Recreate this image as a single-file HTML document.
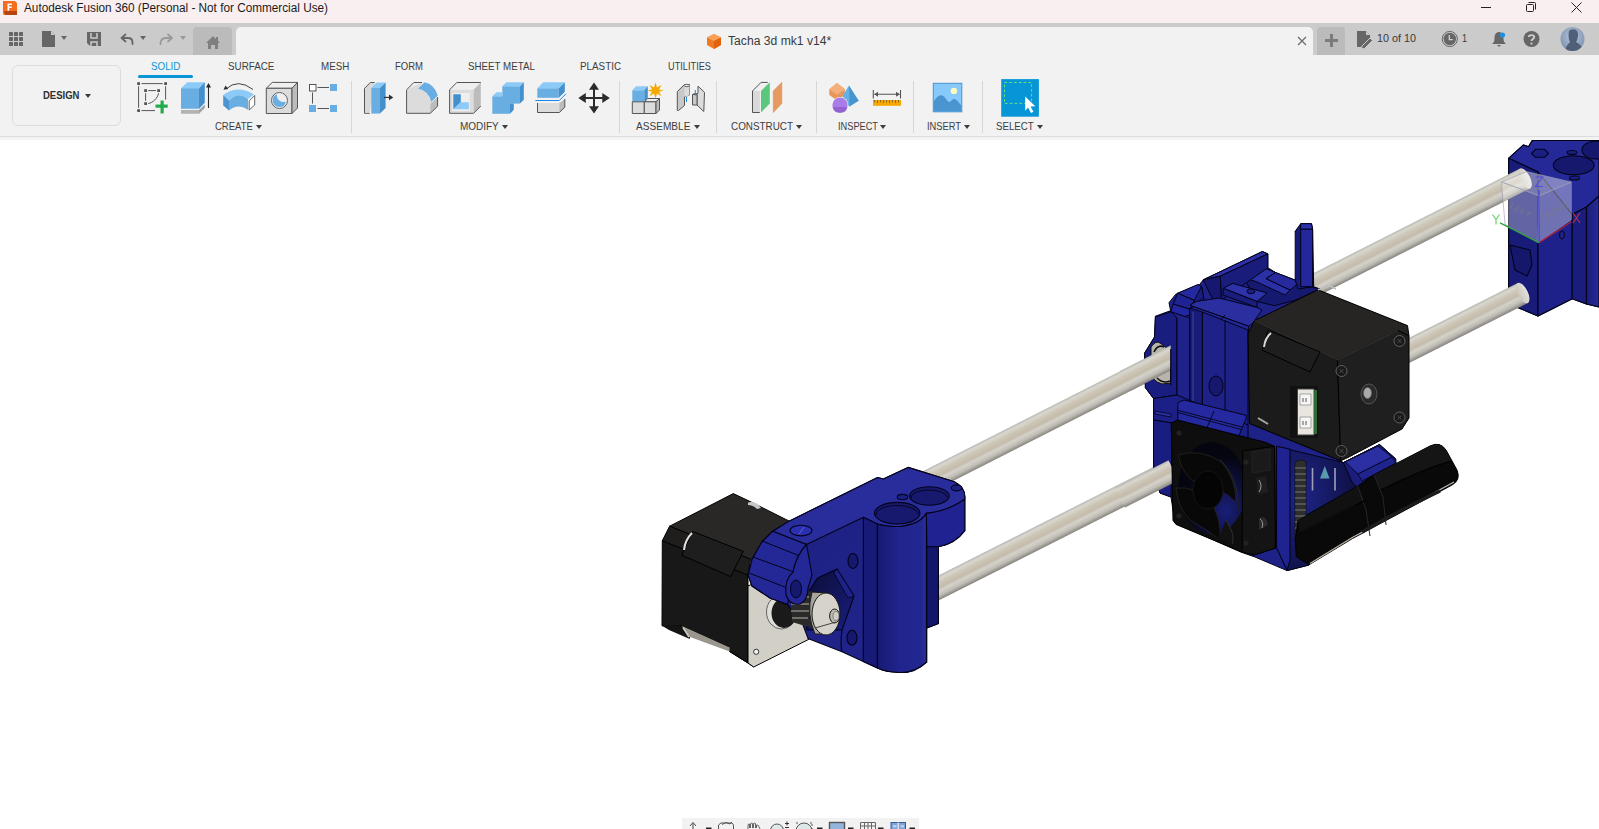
<!DOCTYPE html>
<html><head><meta charset="utf-8">
<style>
*{margin:0;padding:0;box-sizing:border-box}
html,body{width:1599px;height:829px;overflow:hidden;background:#ffffff;font-family:"Liberation Sans",sans-serif;color:#3d3d3d}
.a{position:absolute}
#title{left:0;top:0;width:1599px;height:23px;background:#f9eff0}
#tabbar{left:0;top:23px;width:1599px;height:32px;background:#cbcbcb}
#toolbar{left:0;top:55px;width:1599px;height:82px;background:#f2f2f2;border-bottom:1px solid #dddddd}
#strip{left:0;top:137px;width:1599px;height:3px;background:#f3f3f3}
.t{position:absolute;white-space:nowrap;line-height:1}
.tab{font-size:11px;top:60.8px;color:#3d3d3d;transform-origin:0 0}
.grp{font-size:11px;top:120.7px;color:#3d3d3d;transform-origin:0 0}
.sep{position:absolute;top:81px;width:1px;height:52px;background:#d6d6d6}
.arr{position:absolute;width:0;height:0;border-left:3px solid transparent;border-right:3px solid transparent;border-top:4px solid #3d3d3d}
svg{position:absolute;overflow:visible}
</style></head><body>
<div id="title" class="a"></div>
<div id="tabbar" class="a"></div>
<div id="toolbar" class="a"></div>
<div id="strip" class="a"></div>

<!-- title bar -->
<svg style="left:0;top:0" width="30" height="23">
  <path d="M3 1 L15 1 L17 3 L17 15 L4 15 L3 14 Z" fill="#f46d1e"/>
  <path d="M4 11 L17 11 L17 15 L5 15 Z" fill="#b5460f"/>
  <path d="M7.5 3.5 h4.5 v1.6 h-2.8 v1.5 h2.5 v1.5 h-2.5 v2.6 h-1.7 z" fill="#fff"/>
</svg>
<div class="t" style="left:24px;top:2.2px;font-size:12.5px;color:#1a1a1a;transform:scaleX(0.941);transform-origin:0 0">Autodesk Fusion 360 (Personal - Not for Commercial Use)</div>
<svg style="left:1480px;top:0" width="110" height="20">
  <line x1="1" y1="7.5" x2="11" y2="7.5" stroke="#222" stroke-width="1"/>
  <rect x="46.5" y="4.5" width="7" height="7" fill="none" stroke="#222" stroke-width="1" rx="1"/>
  <path d="M48.5 2.5 H54.5 a1 1 0 0 1 1 1 V9.5" fill="none" stroke="#222" stroke-width="1"/>
  <path d="M91.5 2.5 L101.5 12.5 M101.5 2.5 L91.5 12.5" stroke="#222" stroke-width="1"/>
</svg>

<!-- tab bar icons -->
<svg style="left:0;top:23px" width="240" height="32">
  <g fill="#666">
    <rect x="9" y="9" width="4" height="4" rx=".6"/><rect x="14" y="9" width="4" height="4" rx=".6"/><rect x="19" y="9" width="4" height="4" rx=".6"/>
    <rect x="9" y="14" width="4" height="4" rx=".6"/><rect x="14" y="14" width="4" height="4" rx=".6"/><rect x="19" y="14" width="4" height="4" rx=".6"/>
    <rect x="9" y="19" width="4" height="4" rx=".6"/><rect x="14" y="19" width="4" height="4" rx=".6"/><rect x="19" y="19" width="4" height="4" rx=".6"/>
    <path d="M42 8 H51 L55 12 V24 H42 Z"/>
    <path d="M61 13 H67 L64 17 Z"/>
    <path d="M87 9 H101 V23 H90 L87 20 Z"/>
  </g>
  <path d="M91 10 V15 H97 V10" fill="none" stroke="#cbcbcb" stroke-width="1.5"/>
  <path d="M91 23 V19 H97 V23" fill="none" stroke="#cbcbcb" stroke-width="1.5"/>
  <path d="M51 8 L55 12 H51 Z" fill="#cbcbcb"/>
  <path d="M121.5 15 L125.5 11.5 M121.5 15 L125.5 18.5 M121.5 15 H128 Q132.5 15 132.5 19.5 V21" fill="none" stroke="#666" stroke-width="1.8" stroke-linecap="round"/>
  <path d="M140 13 H146 L143 17 Z" fill="#666"/>
  <path d="M172 15 L168 11.5 M172 15 L168 18.5 M172 15 H166 Q161 15 160.5 20 V21" fill="none" stroke="#9a9a9a" stroke-width="1.8" stroke-linecap="round"/>
  <path d="M180 13 H186 L183 17 Z" fill="#9a9a9a"/>
</svg>
<div class="a" style="left:193px;top:27px;width:39px;height:28px;background:#bbbbbb;border-radius:4px 4px 0 0"></div>
<svg style="left:193px;top:27px" width="39" height="28">
  <path d="M13 16 L20 9 L23 12 V10 H25 V14 L27 16 H25 V22 H22 V18 H18 V22 H15 V16 Z" fill="#7f7f7f"/>
</svg>
<div class="a" style="left:236px;top:27px;width:1077px;height:28px;background:#f2f2f2;border-radius:5px 5px 0 0"></div>
<svg style="left:706px;top:33px" width="16" height="17">
  <path d="M8 1 L15 4.5 L15 12 L8 16 L1 12 L1 4.5 Z" fill="#f07a22"/>
  <path d="M8 1 L15 4.5 L8 8 L1 4.5 Z" fill="#f9a25a"/>
  <path d="M8 8 L15 4.5 L15 12 L8 16 Z" fill="#e0620e"/>
</svg>
<div class="t" style="left:727.5px;top:35.4px;font-size:12.5px;color:#3a3a3a;transform:scaleX(0.971);transform-origin:0 0">Tacha 3d mk1 v14*</div>
<svg style="left:1296px;top:35px" width="12" height="12">
  <path d="M2 2 L10 10 M10 2 L2 10" stroke="#6e6e6e" stroke-width="1.3"/>
</svg>
<div class="a" style="left:1317px;top:27px;width:28px;height:28px;background:#bbbbbb;border-radius:4px 4px 0 0"></div>
<svg style="left:1317px;top:27px" width="28" height="28">
  <path d="M14.5 7 V20 M8 13.5 H21" stroke="#7c7c7c" stroke-width="3"/>
</svg>
<svg style="left:1356px;top:30px" width="20" height="18">
  <path d="M1 1 H10 L14 5 V8 L6 16 V17 H1 Z" fill="#666"/>
  <path d="M10 1 L14 5 H10 Z" fill="#cbcbcb"/>
  <path d="M6 16 L14 8 L16.5 10.5 L8.5 18.5 L5.5 18.8 Z" fill="#666" stroke="#cbcbcb" stroke-width="1"/>
</svg>
<div class="t" style="left:1377px;top:33.3px;font-size:11.5px;color:#3a3a3a;transform:scaleX(0.937);transform-origin:0 0">10 of 10</div>
<svg style="left:1440px;top:30px" width="20" height="18">
  <circle cx="9.8" cy="9" r="7.6" fill="none" stroke="#666" stroke-width="1"/>
  <circle cx="9.8" cy="9" r="6.2" fill="#666"/>
  <path d="M9.3 5 V9.6 H12.8" fill="none" stroke="#d0d0d0" stroke-width="1.3"/>
</svg>
<div class="t" style="left:1461.5px;top:33.3px;font-size:11.5px;color:#3a3a3a;transform:scaleX(0.8);transform-origin:0 0">1</div>
<svg style="left:1490px;top:30px" width="20" height="18">
  <path d="M9 2 C5 2 4.5 6 4.5 9 C4.5 12 3 13 2 14 H16 C15 13 13.5 12 13.5 9 C13.5 6 13 2 9 2 Z" fill="#666"/>
  <path d="M7 15 H11 L9 17 Z" fill="#666"/>
  <circle cx="12.5" cy="5" r="2.6" fill="#1e90e6"/>
</svg>
<svg style="left:1522px;top:30px" width="20" height="18">
  <circle cx="9.5" cy="9" r="8" fill="#666"/>
  <path d="M6.8 7 C6.8 4.5 12.2 4.5 12.2 7 C12.2 9 9.5 9 9.5 11" fill="none" stroke="#cbcbcb" stroke-width="1.9"/>
  <circle cx="9.5" cy="13.6" r="1.1" fill="#cbcbcb"/>
</svg>
<svg style="left:1560px;top:27px" width="26" height="25">
  <defs><radialGradient id="av" cx="50%" cy="40%" r="60%"><stop offset="0" stop-color="#b5c4da"/><stop offset="1" stop-color="#7f93b0"/></radialGradient>
  <clipPath id="avc"><circle cx="12.5" cy="12" r="12"/></clipPath></defs>
  <circle cx="12.5" cy="12" r="12" fill="url(#av)"/>
  <g clip-path="url(#avc)" fill="#4f5f78">
    <path d="M9 4 Q11 1.5 15 2.5 Q18.5 4 18 9 Q17.5 13 16 15 Q20 17 22 20 L23 26 H4 Q6 18 10 15.5 Q8.5 12 8.5 8 Z"/>
  </g>
</svg>

<!-- toolbar -->
<div class="a" style="left:12px;top:65px;width:109px;height:61px;border:1.5px solid #dcdcdc;border-radius:6px"></div>
<div class="t" style="left:42.5px;top:89.7px;font-size:11px;font-weight:bold;color:#2f2f2f;transform:scaleX(0.865);transform-origin:0 0">DESIGN</div>
<div class="arr" style="left:85px;top:94px"></div>

<div class="t tab" style="left:150.6px;transform:scaleX(0.89);color:#0696d7">SOLID</div>
<div class="a" style="left:138px;top:75px;width:55px;height:3px;background:#0696d7;border-radius:2px"></div>
<div class="t tab" style="left:228px;transform:scaleX(0.893)">SURFACE</div>
<div class="t tab" style="left:321.2px;transform:scaleX(0.89)">MESH</div>
<div class="t tab" style="left:394.5px;transform:scaleX(0.865)">FORM</div>
<div class="t tab" style="left:467.5px;transform:scaleX(0.888)">SHEET METAL</div>
<div class="t tab" style="left:580px;transform:scaleX(0.894)">PLASTIC</div>
<div class="t tab" style="left:668px;transform:scaleX(0.837)">UTILITIES</div>

<div class="t grp" style="left:214.6px;transform:scaleX(0.863)">CREATE</div><div class="arr" style="left:256px;top:125px"></div>
<div class="t grp" style="left:460px;transform:scaleX(0.906)">MODIFY</div><div class="arr" style="left:502px;top:125px"></div>
<div class="t grp" style="left:636px;transform:scaleX(0.918)">ASSEMBLE</div><div class="arr" style="left:694px;top:125px"></div>
<div class="t grp" style="left:731px;transform:scaleX(0.898)">CONSTRUCT</div><div class="arr" style="left:796px;top:125px"></div>
<div class="t grp" style="left:837.5px;transform:scaleX(0.839)">INSPECT</div><div class="arr" style="left:880px;top:125px"></div>
<div class="t grp" style="left:927px;transform:scaleX(0.847)">INSERT</div><div class="arr" style="left:964px;top:125px"></div>
<div class="t grp" style="left:996px;transform:scaleX(0.882)">SELECT</div><div class="arr" style="left:1037px;top:125px"></div>

<div class="sep" style="left:351px"></div>
<div class="sep" style="left:619px"></div>
<div class="sep" style="left:716px"></div>
<div class="sep" style="left:816px"></div>
<div class="sep" style="left:913px"></div>
<div class="sep" style="left:982px"></div>

<svg style="left:0;top:0" width="1100" height="140">
<g id="sketch">
  <g fill="#555">
    <rect x="137.2" y="82.2" width="2.8" height="2.8"/><rect x="164.2" y="82.2" width="2.8" height="2.8"/><rect x="137.2" y="109.2" width="2.8" height="2.8"/>
    <rect x="144.2" y="89.2" width="2.8" height="2.8"/><rect x="157.2" y="89.2" width="2.8" height="2.8"/><rect x="144.2" y="102.2" width="2.8" height="2.8"/>
  </g>
  <path d="M141.5 83.6 H162.7 M138.6 86.2 V107.8 M165.6 86.2 V99.6 M141.5 110.6 H155 M148.2 90.6 H156 M145.6 93.2 V100.8 M158.6 93.2 C157.5 98.5 153 102.5 148.2 103.6" fill="none" stroke="#555" stroke-width="1"/>
  <path d="M160.2 100.2 H164 V104.2 H168 V108 H164 V113.8 H160.2 V108 H155.2 V104.2 H160.2 Z" fill="#23aa4a" stroke="#f2f2f2" stroke-width=".6"/>
</g>
<g id="extrude">
  <path d="M181 88.2 L187.2 82.2 H204.8 L199 88.2 Z" fill="#8ccaf8"/>
  <path d="M181 88.2 H199 V108.8 H181 Z" fill="#68aee3"/>
  <path d="M199 88.2 L204.8 82.2 V102.8 L199 108.8 Z" fill="#4490cc"/>
  <path d="M181 110 H199 V113.8 H181 Z" fill="#b3b3b3"/>
  <path d="M199 110 L204.8 104.5 V108 L199 113.8 Z" fill="#a3a3a3"/>
  <path d="M208.5 108 V85" stroke="#2b2b2b" stroke-width="1.1"/>
  <path d="M206 87.5 L208.5 83 L211 87.5 Z" fill="#2b2b2b"/>
</g>
<g id="revolve">
  <path d="M223.2 95 Q238 84.5 254 94.5 L248 99 Q238.5 91 229 100.5 Z" fill="#8ccaf8"/>
  <path d="M229 100.5 Q238.5 91 248 99 V109.8 Q238 103 229 110.5 Z" fill="#68aee3"/>
  <path d="M223.2 95 L229 100.5 V110.5 L223.2 105.5 Z" fill="#4a95d0"/>
  <path d="M249.2 101 L254.7 95.5 V105 L249.2 110 Z" fill="#fff" stroke="#555" stroke-width=".9"/>
  <path d="M253 89.5 Q238 78 226 89" fill="none" stroke="#2b2b2b" stroke-width=".9"/>
  <path d="M223.5 89.8 L225.5 85.5 L228.2 89 Z" fill="#2b2b2b"/>
</g>
<g id="hole">
  <path d="M266.3 88.3 L272.3 82.4 H297.5 L292 88.3 Z" fill="#efefef" stroke="#555" stroke-width="1"/>
  <path d="M266.3 88.3 H292 V113.5 H266.3 Z" fill="#dcdcdc" stroke="#555" stroke-width="1"/>
  <path d="M292 88.3 L297.5 82.4 V108 L292 113.5 Z" fill="#bcbcbc" stroke="#555" stroke-width="1"/>
  <circle cx="279.5" cy="100.5" r="8" fill="#efefef" stroke="#555" stroke-width=".9"/>
  <path d="M277 94.2 A6.6 6.6 0 1 0 285.8 101.4 A6.5 6.5 0 0 1 277 94.2 Z" fill="#68aee3"/>
</g>
<g id="pattern">
  <rect x="309.5" y="84.5" width="6.5" height="6.5" fill="#fff" stroke="#555" stroke-width="1"/>
  <rect x="330" y="84" width="7" height="7" fill="#68aee3"/>
  <rect x="309" y="105" width="7" height="7" fill="#68aee3"/>
  <rect x="330" y="105" width="7" height="7" fill="#68aee3"/>
  <path d="M317.5 87.5 H329 M312.5 92.5 V103.6 M317.5 108.5 H329" stroke="#555" stroke-width="1"/>
</g>
<g id="presspull">
  <path d="M374.6 82.5 H370.3 L364.5 88.4 V113.3 H369.7" fill="#d9d9d9" stroke="#555" stroke-width="1"/>
  <path d="M365 88.4 H370 V112.8 H365 Z" fill="#d9d9d9"/>
  <path d="M371.3 88 L376.5 82.4 H385.6 L380 88 Z" fill="#8ccaf8"/>
  <path d="M371.3 88 H380 V113.6 H371.3 Z" fill="#68aee3"/>
  <path d="M380 88 L385.6 82.4 V108 L380 113.6 Z" fill="#4490cc"/>
  <path d="M384 97.4 H390" stroke="#2b2b2b" stroke-width="1.1"/>
  <path d="M389 94.6 L393.3 97.4 L389 100.2 Z" fill="#2b2b2b"/>
</g>
<g id="fillet">
  <path d="M406.6 89.8 L413.8 82.5 H422.5 L418 88.5 Q426 89 431.3 102 V113.3 H406.6 Z" fill="#dcdcdc"/>
  <path d="M406.8 89.6 L413.8 82.5 H422" fill="#eeeeee" stroke="#555" stroke-width="1"/>
  <path d="M406.6 89.8 H418 Q428 91 431 102" fill="none" stroke="#f5f5f5" stroke-width="0"/>
  <path d="M418 88.5 L424.5 82.2 Q434.5 84 437.8 95.5 L431.3 102 Q428.5 90.8 418 88.5 Z" fill="#68aee3"/>
  <path d="M430.3 104 L437.5 97 V106.5 L430.3 113.3 Z" fill="#bcbcbc"/>
  <path d="M406.6 89.8 V113.3 H430.3 L437.6 106.2 V97" fill="none" stroke="#555" stroke-width="1"/>
</g>
<g id="shell">
  <path d="M449.6 89.8 L456.8 82.5 H480.8 L473.6 89.8 Z" fill="#efefef"/>
  <path d="M449.6 89.8 H473.6 V113.3 H449.6 Z" fill="#dcdcdc"/>
  <path d="M473.6 89.8 L480.8 82.5 V106 L473.6 113.3 Z" fill="#bcbcbc"/>
  <path d="M449.6 113.3 V89.8 L456.8 82.5 H480.8" fill="none" stroke="#555" stroke-width="1"/>
  <path d="M449.6 113.3 H473.6 L480.8 106" fill="none" stroke="#555" stroke-width="1"/>
  <rect x="452.3" y="93" width="17.5" height="17.8" fill="#efefef"/>
  <path d="M453.3 94.2 H460.8 V102.3 L453.3 109.3 Z" fill="#4490cc"/>
  <path d="M460.8 102.3 H468.8 V109.3 H453.3 Z" fill="#8ccaf8"/>
</g>
<g id="combine">
  <path d="M502.3 86.3 L506.3 82.3 H523.8 L520 86.3 Z" fill="#8ccaf8"/>
  <path d="M502.3 86.3 H520 V103.6 H502.3 Z" fill="#68aee3"/>
  <path d="M520 86.3 L523.8 82.3 V99.8 L520 103.6 Z" fill="#4490cc"/>
  <path d="M492.3 96.3 L496.5 92.3 H502.3 V96.3 Z" fill="#8ccaf8"/>
  <path d="M492.3 96.3 H510 V113.8 H492.3 Z" fill="#68aee3"/>
  <path d="M502.3 96.3 H510 V103.6 H502.3 Z" fill="#68aee3"/>
  <path d="M510 103.6 H513.8 V109.8 L510 113.8 Z" fill="#4490cc"/>
</g>
<g id="split">
  <path d="M537.3 88.3 L543.3 82.3 H564.8 L558.8 88.3 Z" fill="#8ccaf8"/>
  <path d="M537.3 88.3 H558.8 V97.8 H537.3 Z" fill="#68aee3"/>
  <path d="M558.8 88.3 L564.8 82.3 V91.8 L558.8 97.8 Z" fill="#4490cc"/>
  <path d="M535.3 100.5 H559.3 L566 93.8" fill="none" stroke="#1e88e5" stroke-width="1"/>
  <path d="M537.5 103 H559.3 V112.5 H537.5 Z" fill="#dcdcdc"/>
  <path d="M559.3 103 L564.8 99 V107.3 L559.3 112.5 Z" fill="#bcbcbc"/>
  <path d="M537.5 103 V112.5 H559.3 L564.8 107.3 V99" fill="none" stroke="#555" stroke-width="1"/>
</g>
<g id="move" fill="#2b2b2b">
  <path d="M593 86 H595 V110 H593 Z M582 97 H606 V99 H582 Z"/>
  <path d="M594 82.5 L599 89.8 H589 Z M594 113.5 L599 106.2 H589 Z M578.3 98 L585.8 93 V103 Z M609.8 98 L602.3 93 V103 Z"/>
</g>
<g id="newcomp">
  <path d="M632.3 90.3 L636 86.3 H647.8 L644.3 90.3 Z" fill="#8ccaf8"/>
  <path d="M632.3 90.3 H644.3 V101.8 H632.3 Z" fill="#68aee3"/>
  <path d="M644.3 90.3 L647.8 86.3 V98 L644.3 101.8 Z" fill="#4490cc"/>
  <path d="M632.3 101.8 H644.3 V113.5 H632.3 Z" fill="#dcdcdc" stroke="#555" stroke-width="1"/>
  <path d="M644.3 101.8 L647.8 98.5 H659.5 L656 101.8 Z" fill="#efefef" stroke="#555" stroke-width="1"/>
  <path d="M644.3 101.8 H656 V113.5 H644.3 Z" fill="#dcdcdc" stroke="#555" stroke-width="1"/>
  <path d="M656 101.8 L659.5 98.5 V110 L656 113.5 Z" fill="#bcbcbc" stroke="#555" stroke-width="1"/>
  <path d="M655.5 82.3 L657 87.5 L661.5 85 L659 89.5 L663.8 90.5 L659 91.8 L661.5 96.2 L657 93.5 L655.5 98.5 L654 93.5 L649.5 96.2 L652 91.8 L647.3 90.5 L652 89.5 L649.5 85 L654 87.5 Z" fill="#f5a800"/>
</g>
<g id="joint">
  <path d="M677.3 91.5 L684.5 84.6 H689.5 V95 L684.5 96.8 V105.5 L678.5 110.5 H677.3 Z" fill="#c8c8c8" stroke="#555" stroke-width="1"/>
  <path d="M684.5 85 H689.5 V95 Q687 96.8 684.5 96.8 Z" fill="#dcdcdc"/>
  <ellipse cx="686.8" cy="85.5" rx="2.5" ry="1.2" fill="#f2f2f2" stroke="#555" stroke-width=".9"/>
  <path d="M686.5 97 V102" stroke="#1e88e5" stroke-width="1"/>
  <path d="M692.5 94.5 Q695 93 697 94.5 V105 L703.8 111.5 L704.5 92.3 L698 86.2 V93.5 Z" fill="#dcdcdc" stroke="#555" stroke-width="1"/>
  <path d="M692.5 94.5 V105 H697 V94.5 Z" fill="#c8c8c8" stroke="#555" stroke-width="1"/>
  <path d="M695.3 90 V95.5" stroke="#1e88e5" stroke-width="1"/>
</g>
<g id="construct">
  <path d="M767.8 82.4 H761 L752.5 91 V112.5 H759.8" fill="#f0f0f0" stroke="#555" stroke-width="1"/>
  <path d="M753 91 H759.8 V112 H753 Z" fill="#d9d9d9"/>
  <path d="M761 91 L769.8 82.3 V103.5 L761 112.5 Z" fill="#5ac87c"/>
  <path d="M773.3 91 L781.8 82.3 V103.5 L773.3 112.5 Z" fill="#e69a62" stroke="#d88748" stroke-width=".5"/>
</g>
<g id="inspect">
  <path d="M829.3 89.3 L837 83 L844.8 89.3 L844.8 95 L837 100.5 L829.3 95 Z" fill="#e8955a"/>
  <path d="M829.3 89.3 L837 83 L844.8 89.3 L837 95 Z" fill="#f3b07a"/>
  <path d="M849 85.5 L842.5 96 L849.2 106.8 Z" fill="#65b0e4"/>
  <path d="M849 85.5 L858.8 100.8 L849.2 106.8 Z" fill="#4596d0"/>
  <circle cx="840" cy="105" r="8" fill="#f2f2f2"/>
  <circle cx="840" cy="105" r="7.6" fill="#a87de8"/>
  <path d="M832.6 107 H847.4 A7.6 7.6 0 0 1 832.6 107 Z" fill="#9162d0"/>
</g>
<g id="measure">
  <path d="M873.3 90 V98.5 M900.5 90 V98.5 M874.5 94.3 H899.3" stroke="#555" stroke-width="1.1"/>
  <path d="M874.2 94.3 L878 91.8 V96.8 Z M899.8 94.3 L896 91.8 V96.8 Z" fill="#555"/>
  <rect x="873" y="100" width="28" height="5.8" fill="#f5a800"/>
  <path d="M874.5 100 V102.3 M877.5 100 V103 M880.5 100 V102.3 M883.5 100 V103 M886.5 100 V102.3 M889.5 100 V103 M892.5 100 V102.3 M895.5 100 V103 M898.5 100 V102.3" stroke="#6a5a3a" stroke-width=".8"/>
</g>
<g id="insert">
  <rect x="933.3" y="83.3" width="28.5" height="28.5" fill="#87c9fb" stroke="#4a92cf" stroke-width="1"/>
  <path d="M933.8 101.5 Q938 94.5 941.5 95.2 Q944 95.5 947.5 101 Q949 103 951 101 Q954 97 957.5 101 L961.3 105.5 V111.3 H933.8 Z" fill="#4a94cf"/>
  <circle cx="953.9" cy="90.9" r="3.2" fill="#fffac0"/>
</g>
<g id="select">
  <rect x="1001.2" y="79.1" width="37.7" height="37.6" fill="#0696d7"/>
  <rect x="1004.5" y="82.5" width="27.1" height="20.9" fill="none" stroke="#6ee07a" stroke-width="1" stroke-dasharray="2.6 2.2"/>
  <path d="M1025.2 96.6 L1035.3 106.2 L1030.5 106.4 L1033.5 111.8 L1031 113.1 L1028.1 107.6 L1025.2 110.8 Z" fill="#fff"/>
</g>
</svg>


<svg style="left:0;top:0" width="1599" height="829">
<defs>
  <clipPath id="canvasclip"><rect x="0" y="140" width="1599" height="689"/></clipPath>
  <linearGradient id="rod" x1="0" y1="0" x2="0" y2="1">
    <stop offset="0" stop-color="#b9b8b0"/>
    <stop offset="0.12" stop-color="#d8d7d0"/>
    <stop offset="0.3" stop-color="#cdc6b6"/>
    <stop offset="0.5" stop-color="#c4bcab"/>
    <stop offset="0.63" stop-color="#d4d2ca"/>
    <stop offset="0.82" stop-color="#bdbbb3"/>
    <stop offset="1" stop-color="#86837c"/>
  </linearGradient>
  <linearGradient id="cyl" x1="0" y1="0" x2="1" y2="0">
    <stop offset="0" stop-color="#171a72"/>
    <stop offset="0.45" stop-color="#20248c"/>
    <stop offset="0.9" stop-color="#232792"/>
    <stop offset="1" stop-color="#2d3198"/>
  </linearGradient>
  <linearGradient id="armfront" x1="0" y1="0" x2="1" y2="1">
    <stop offset="0" stop-color="#1c1f80"/>
    <stop offset="1" stop-color="#22268e"/>
  </linearGradient>
  <radialGradient id="fanin" cx="60%" cy="40%" r="55%">
    <stop offset="0" stop-color="#05051a"/>
    <stop offset="0.6" stop-color="#10134a"/>
    <stop offset="1" stop-color="#1a1e70"/>
  </radialGradient>
  <radialGradient id="navy" cx="30%" cy="40%" r="70%">
    <stop offset="0" stop-color="#1e2488"/>
    <stop offset="1" stop-color="#0e1040"/>
  </radialGradient>
  <linearGradient id="cube" x1="0" y1="0" x2="0" y2="1">
    <stop offset="0" stop-color="#ffffff" stop-opacity="0.6"/>
    <stop offset="1" stop-color="#ffffff" stop-opacity="0.4"/>
  </linearGradient>
</defs>

<g clip-path="url(#canvasclip)">
<!-- ============ right block ============ -->
<defs>
  <linearGradient id="rcyl" x1="0" y1="0" x2="1" y2="0">
    <stop offset="0" stop-color="#1a1d7c"/>
    <stop offset="1" stop-color="#262a96"/>
  </linearGradient>
  <linearGradient id="rodcap" x1="0" y1="0" x2="1" y2="0">
    <stop offset="0" stop-color="#c9c6bc"/>
    <stop offset="1" stop-color="#e4e2dc"/>
  </linearGradient>
</defs>
<g id="rblock" stroke="#03031a" stroke-width="1.1" stroke-linejoin="round">
  <path d="M1508.6 158.3 L1523.5 144.9 L1528.5 146.8 L1532.4 140.4 H1599 V307 L1586.5 304 L1572.2 298.8 L1538 316 L1516.4 307 L1508.6 300 Z" fill="#1d2086"/>
  <path d="M1508.6 158.3 L1523.5 144.9 L1528.5 146.8 L1532.4 140.4 H1599 V196 L1586.5 207 L1572.2 214.4 L1538 172 Z" fill="#252997"/>
  <path d="M1508.6 158.3 L1538 172 V316 L1516.4 307 L1508.6 300 Z" fill="#181b78"/>
  <path d="M1538 172 L1572.2 214.4 V298.8 L1538 316 Z" fill="#1e2189"/>
  <path d="M1572.2 214.4 L1586.5 207 V304 L1572.2 298.8 Z" fill="#1a1d7e"/>
  <path d="M1586.5 207 L1599 196 V307 L1586.5 304 Z" fill="url(#rcyl)"/>
  <ellipse cx="1573.7" cy="165.3" rx="20.4" ry="9.5" fill="#15186c"/><ellipse cx="1596" cy="150" rx="14" ry="9" fill="#15186c"/>
  <ellipse cx="1572" cy="152.5" rx="5" ry="2" fill="#1c1f82"/>
  <ellipse cx="1574.5" cy="178" rx="5" ry="2" fill="#1c1f82"/>
  <path d="M1531.5 153.3 l4 -4 h9 l4 4 l-4 4 h-9 z" fill="#1c1f82"/>
  <path d="M1510 245 L1530 250 L1532 265 L1527 276 L1515 270 Z" fill="#14176a"/>
  <ellipse cx="1562" cy="235" rx="2.5" ry="4" fill="none" stroke-width=".9"/>
</g>

<!-- ============ rods ============ -->
<g transform="translate(915 487.7) rotate(-26.88)">
  <rect x="0" y="-11.2" width="684" height="22.4" fill="url(#rod)"/>
  <ellipse cx="684" cy="0" rx="5" ry="11.2" fill="url(#rodcap)"/>
</g>
<g transform="translate(930 592.3) rotate(-26.79)">
  <rect x="0" y="-11.2" width="664" height="22.4" fill="url(#rod)"/>
  <ellipse cx="664" cy="0" rx="5" ry="11.2" fill="url(#rodcap)"/>
</g>

<!-- ============ carriage body ============ -->
<g id="carriage" stroke="#03031a" stroke-width="1" stroke-linejoin="round">
  <!-- overall silhouette -->
  <path d="M1144.5 353.3 L1154.5 337 L1155.4 317.1 L1170.8 311.7 L1169 302.7 L1175.8 294.2 L1199.7 284.5 L1203.3 279.8 L1262.4 251.5 L1267.8 253.9 L1267.8 267.7 L1275.6 272.6 L1295.2 280.1 L1320 289 L1250 330 L1249.5 423.4 L1340.7 460.8 L1343.3 462.6 L1379.5 444.5 L1395.8 459 L1357.8 486 L1298 520 L1295 540 L1309 565 L1287 570.6 L1255 557 L1240.7 552 L1175 523 L1171 497 L1160 493 L1153.6 470 L1153.6 398.6 L1145.4 387.7 Z" fill="#1e2188"/>
  <!-- back U block -->
  <path d="M1243.7 277.4 L1262.4 267.1 L1275.6 272.6 L1296.2 283 L1320 289 L1296.2 300 L1274.4 305.7 L1257 301.5 Z" fill="#161970"/>
  <path d="M1243.7 277.4 L1262.4 267.1 L1275.6 272.6 L1266 278.6 L1290 290 L1285 295 L1257 282 Z" fill="#2b30a6"/>
  <path d="M1266 278.6 L1275.6 272.6 L1300 282 L1290 290 Z" fill="#262a9c"/>
  <!-- wall -->
  <path d="M1203.3 279.8 L1262.4 251.5 L1267.8 253.9 L1220.2 276.2 Z" fill="#2c30a4"/>
  <path d="M1220.2 276.2 L1267.8 253.9 L1267.8 267.7 L1221.4 300.3 Z" fill="#191c7a"/>
  <path d="M1203.3 279.8 L1220.2 276.2 L1221.4 300.3 L1213 300 Z" fill="#15186e"/>
  <!-- plate with hole -->
  <path d="M1223.2 288.3 L1232.8 283.4 L1267.2 293 L1257 301.5 Z" fill="#2d32a8"/>
  <ellipse cx="1251" cy="291.3" rx="4" ry="2.4" fill="#1c1f82"/>
  <path d="M1223.2 288.3 L1257 301.5 L1257 307.5 L1223 295 Z" fill="#1a1d7c"/>
  <!-- left ridge blocks -->
  <path d="M1177.6 293.2 L1197.9 284.5 L1201.5 286.3 L1204 300 L1195 304 L1194.3 300.4 Z" fill="#2529a0"/>
  <path d="M1173.3 304 L1177.6 293.2 L1194.3 300.4 L1190 309.4 Z" fill="#1f2292"/>
  <path d="M1201.5 286.3 L1203.7 297.5 L1195 304 L1194.3 300.4 Z" fill="#1a1d80"/>
  <path d="M1155.2 316.3 L1171.1 310.5 L1173.3 304 L1190 309.4 L1190 315 L1172 320 L1160 322 Z" fill="#2226a0"/>
  <!-- front ledge -->
  <path d="M1190 305 L1196 301.5 L1219 298 L1257 307.5 L1262 310 L1252.7 323.2 L1248.6 326.2 L1192.5 306.3 Z" fill="#2a2e9f"/>
  <path d="M1192.5 306.3 L1248.6 326.2 L1248 335 L1190 314 Z" fill="#23279a"/>
  <path d="M1225 315 L1218 323" fill="none"/>
  <!-- left panels -->
  <path d="M1155.4 317.1 L1170.8 311.7 L1177 318 L1177 395 L1153.6 398.6 L1145.4 387.7 L1144.5 353.3 L1154.5 337 Z" fill="#1a1d80"/>
  <path d="M1170.8 311.7 L1189.8 318 L1189.8 405 L1177 400 L1177 318 Z" fill="#1f2289"/>
  <path d="M1189.8 308 L1202.4 312 L1202.4 408 L1189.8 405 Z" fill="#181b78"/>
  <path d="M1193 312 V402" fill="none" stroke="#4a4ea8" stroke-width=".8"/>
  <path d="M1202.4 312 L1248 330 L1248 425 L1202.4 408 Z" fill="#1e2188"/>
  <path d="M1225 320 V418" fill="none"/>
  <ellipse cx="1216" cy="386" rx="7" ry="10" fill="#15186c"/>
  <path d="M1153.6 398.6 L1177 395 L1248 425 L1248 440 L1240 448 L1172.2 423 L1153.6 420 Z" fill="#1c1f86"/>
  <path d="M1177.8 402.7 L1184 400 L1246.2 415.3 L1246.2 418 L1236 443.2 L1177.8 420.4 Z" fill="#2529a0"/>
  <path d="M1177.8 410.3 L1242 427 M1177.8 412.5 L1241 429.5 M1214 411 L1206 430" fill="none" stroke-width=".9"/>
  
  <path d="M1153.6 420 L1172.2 423 L1171 497 L1160 493 L1153.6 470 Z" fill="#1a1d80"/>
  <path d="M1155 411 L1171 414 L1171 417 L1155 414 Z" fill="#2c30a6" stroke-width=".8"/>

  <!-- tower pin -->
  <path d="M1295.2 231.3 L1300.7 223.7 L1311.5 223.7 L1312.6 229 L1313.7 286.6 L1298 289 L1295.2 280 Z" fill="#171a76"/>
  <path d="M1300.7 229 H1312.6 V286.6 H1300.7 Z" fill="#23279a"/>
  <path d="M1300.7 223.7 H1311.5 L1312.6 229 H1300.7 Z" fill="#2d32a8"/>
</g>
<!-- rod segment in front of housing + bearing -->
<defs><clipPath id="rodcut"><rect x="1100" y="300" width="70.7" height="120"/></clipPath></defs>
<path d="M1151 347 Q1156 340 1160 343 L1170.7 351 V383 L1162 384 Q1152 381 1151 372 Z" fill="#b7b4ab" stroke="#111" stroke-width="1"/>
<path d="M1154 352 Q1158 344 1164 347 M1157 378 Q1163 384 1170 381" fill="none" stroke="#111" stroke-width="1.6"/>
<g clip-path="url(#rodcut)">
<g transform="translate(1125 381.1) rotate(-26.88)">
  <rect x="0" y="-11.2" width="60" height="22.4" fill="url(#rod)"/>
</g>
</g>
<path d="M1170.7 349 V385" stroke="#03031a" stroke-width="1.1"/>
<defs><clipPath id="rodcut2"><rect x="1100" y="440" width="72" height="80"/></clipPath></defs>
<g clip-path="url(#rodcut2)">
<g transform="translate(1120 497.4) rotate(-26.79)">
  <rect x="0" y="-11.2" width="60" height="22.4" fill="url(#rod)"/>
</g>
</g>

<!-- ============ fan ============ -->
<g id="fan" stroke="#000" stroke-width="1" stroke-linejoin="round">
  <path d="M1171.2 423.2 L1177.4 420 L1265 442.2 L1274.5 446.4 L1275.3 548.2 L1254 555 L1242 552 L1176 524.4 L1173 520.4 Z" fill="#0e0e0e"/>
  <path d="M1242.8 450.6 L1274.5 446.4 L1275.3 548.2 L1254 555 L1242 552 Z" fill="#141414"/>
  <defs><radialGradient id="fanin2" cx="70%" cy="75%" r="60%"><stop offset="0" stop-color="#1a1f78"/><stop offset="0.6" stop-color="#0c0e3a"/><stop offset="1" stop-color="#050510"/></radialGradient>
  <clipPath id="fanclip"><path d="M1173 426 L1242 452 L1242 548 L1175 520 Z"/></clipPath></defs>
  <g clip-path="url(#fanclip)">
  <ellipse cx="1212" cy="488" rx="34" ry="46" fill="url(#fanin2)" stroke="none"/>
  <path d="M1178 455 Q1200 448 1222 462 Q1236 480 1236 502 Q1222 488 1200 484 Q1184 480 1178 455 Z" fill="#080808" stroke="#262626" stroke-width=".8"/>
  <path d="M1176 488 Q1194 486 1210 500 Q1222 520 1220 540 Q1205 528 1190 520 Q1178 508 1176 488 Z" fill="#080808" stroke="#262626" stroke-width=".8"/>
  <path d="M1226 520 Q1236 535 1232 545 Q1225 548 1216 545" fill="#111" stroke="#3a3a3a" stroke-width=".8"/>
  <path d="M1220 460 Q1240 480 1238 510" fill="none" stroke="#222" stroke-width="1.2"/>
  <ellipse cx="1208" cy="490" rx="15" ry="19" fill="#040404" stroke="#1a1a1a" stroke-width=".8"/>
  </g>
  <circle cx="1179" cy="433" r="2.6" fill="#222" stroke="none"/>
  <circle cx="1179" cy="516" r="2.6" fill="#222" stroke="none"/>
  <circle cx="1246" cy="462" r="2.6" fill="#222" stroke="none"/>
  <circle cx="1246" cy="543" r="2.6" fill="#222" stroke="none"/>
  <path d="M1252 452 L1270 449 V470 L1252 473 Z" fill="#1a1a1a" stroke="#262626" stroke-width=".8"/>
  <path d="M1256 478 L1266 476 L1268 492 L1258 495 Z" fill="#1e1e1e" stroke="none"/>
  <path d="M1259 518 Q1266 514 1268 525 L1259 530 Z" fill="#2a2a2a" stroke="none"/>
  <path d="M1259 480 Q1263 486 1259 492 M1260 519 Q1264 522 1262 528" fill="none" stroke="#9a9a9a" stroke-width="1"/>
</g>
<!-- ============ mid navy region (hotend area) ============ -->
<path d="M1276.6 446.4 L1343.3 462.6 L1357.8 486 L1298 520 L1295 540 L1309 565 L1287 570.6 L1276.6 547.7 Z" fill="url(#navy)" stroke="#03031a" stroke-width="1"/>
<path d="M1276.6 446.4 L1290 449 L1290 560 L1287 570 L1276.6 547.7 Z" fill="#1f2390" stroke="#03031a" stroke-width="1"/>
<path d="M1295 462 Q1302 458 1306 462 L1306 540 Q1300 545 1295 540 Z" fill="#2e2e2e" stroke="#111" stroke-width=".8"/>
<path d="M1295 468 h11 M1295 474 h11 M1295 480 h11 M1295 486 h11 M1295 492 h11 M1295 498 h11 M1295 504 h11 M1295 510 h11 M1295 516 h11 M1295 522 h11 M1295 528 h11" stroke="#7a7a7a" stroke-width="1.2"/>
<path d="M1343.3 462.6 L1379.5 444.5 L1395.8 459 L1396 463 L1368 478 L1360 490 L1352 482 Z" fill="#1a1d7c" stroke="#03031a" stroke-width="1"/>
<path d="M1345 462 L1378 446 L1392 457 L1358 474 Z" fill="#2b2fa2" stroke="#03031a" stroke-width=".9"/>
<path d="M1358 474 L1392 457 L1396 463 L1362 481 Z" fill="#20248e" stroke="#03031a" stroke-width=".8"/>
<path d="M1312.5 468 V490.5 M1335 468 V490.5" stroke="#a0a0b8" stroke-width="1.6"/>
<path d="M1320 478.5 L1324.8 466 L1329.5 478.5 Z" fill="#5a9aae"/>

<!-- ============ duct ============ -->
<g id="duct" stroke="#000" stroke-width="1" stroke-linejoin="round">
  <path d="M1295.4 538.6 L1298.1 520.5 L1357.8 486.1 L1374 475 L1430 446 Q1440 441 1446 450 L1457 470 Q1461 480 1452 485 L1352.4 538.6 L1309 564.8 L1296.3 556.7 Z" fill="#090909"/>
  <path d="M1374 475 L1430 446 Q1440 441 1446 450 L1451 461 Q1420 470 1381 490 Z" fill="#151515" stroke="none"/>
  <path d="M1381 490 Q1420 470 1451 461" fill="none" stroke="#000" stroke-width="1.2"/>
  <path d="M1298.1 520.5 L1357.8 486.1 L1364 500 L1300 532 Z" fill="#111" stroke="none"/>
  <path d="M1357.8 486.1 L1366 510 L1370 536 M1374 475 L1383 497 L1386 525" fill="none" stroke="#262626" stroke-width="1"/>
  <path d="M1355 506 L1366 500" fill="none" stroke="#000" stroke-width="1.2"/>
  <path d="M1310 563.5 L1352.4 537.5 L1454 482" fill="none" stroke="#b9b3a4" stroke-width="1.4"/>
  <path d="M1362 532 Q1400 510 1440 491" fill="none" stroke="#1c1c1c" stroke-width="3.5"/>
</g>
<!-- ============ carriage motor ============ -->
<g id="cmotor" stroke="#000" stroke-width="1" stroke-linejoin="round">
  <path d="M1248 333.8 L1254.4 320.7 L1337.5 359.8 L1340.7 460.8 L1249.5 423.4 Z" fill="#1b1b1b"/>
  <path d="M1254.4 320.7 L1318 289.8 L1407.5 325.6 L1409 336 L1398 330.5 L1337.5 359.8 Z" fill="#262523"/>
  <path d="M1337.5 359.8 L1398 330.5 L1409 336 L1409 418 L1402 429 L1348 457.5 L1340.7 460.8 Z" fill="#1f1f1f"/>
  <path d="M1254.4 320.7 L1337.5 359.8 L1398 330.5" fill="none" stroke="#3a3936" stroke-width="1"/>
  <path d="M1318 289.8 L1330 286 L1336 289" fill="none" stroke="#bdbdbd" stroke-width="1.5"/>
  <path d="M1268 330 L1320 352 L1310 372 L1262 350 Z" fill="#1e1e1e"/>
  <path d="M1264 347 Q1265 338 1271 333" stroke="#d8d8d8" stroke-width="2" fill="none"/>
  <path d="M1258 418 L1268 424" stroke="#a8a8a8" stroke-width="2" fill="none"/>
  <path d="M1290 386 H1318 V438 H1290 Z" fill="#111" stroke="none"/>
  <path d="M1297.5 389 H1314 V435 H1297.5 Z" fill="#e8e6df" stroke="#444"/>
  <path d="M1300 394 H1311 V405 H1300 Z M1300 417 H1311 V428 H1300 Z" fill="#f6f6f6" stroke="#777" stroke-width=".6"/>
  <path d="M1303 398 V402 M1306 398 V402 M1303 421 V425 M1306 421 V425" stroke="#333" stroke-width=".8"/>
  <rect x="1314" y="390" width="3" height="44" fill="#2f6a3a" stroke="none"/>
  <ellipse cx="1369" cy="394" rx="8" ry="10" fill="#2a2a2a" stroke="#555"/>
  <ellipse cx="1367.5" cy="393" rx="4" ry="5.5" fill="#aaa" stroke="#666" stroke-width=".6"/>
  <g fill="#1a1a1a" stroke="#707070" stroke-width=".8">
    <circle cx="1341.5" cy="371" r="5.5"/>
    <circle cx="1399.5" cy="341" r="5.5"/>
    <circle cx="1399.5" cy="417.5" r="5.5"/>
    <circle cx="1341.5" cy="451" r="5.5"/>
  </g>
  <g stroke="#6a6a6a" stroke-width=".6" fill="none">
    <path d="M1339.5 369 l4 4 M1343.5 369 l-4 4 M1397.5 339 l4 4 M1401.5 339 l-4 4 M1397.5 415.5 l4 4 M1401.5 415.5 l-4 4 M1339.5 449 l4 4 M1343.5 449 l-4 4"/>
  </g>
</g>
<!-- ============ left motor ============ -->
<g id="lmotor" stroke="#000" stroke-width="1" stroke-linejoin="round">
  <path d="M669.6 526.2 L733.3 493.6 L749 501 L817 535 L750.6 559.3 Z" fill="#2a2826"/>
  <path d="M662.3 540.8 L669.6 526.2 L750.6 559.3 L748 575.3 Z" fill="#1f1e1d"/>
  <path d="M662.3 540.8 L748 575.3 V663 L729.6 651.5 L729.6 647.5 L682 626 L662 625.8 Z" fill="#181818"/>
  <path d="M662 625.8 L682 626 L690 637 L689.8 639.1 L669 630 Z" fill="#141414" stroke="none"/>
  <path d="M682 626 L729.6 647.5 L729.6 651.5 L690 637 Z" fill="#9a968e" stroke="none"/>
  <path d="M683 627.5 L689 637" fill="none" stroke="#cfcbc3" stroke-width="1.6"/>
  <path d="M729.6 651.5 L748 663 L753.7 667" fill="none"/>
  <path d="M748 502.5 Q756 500 761 508 L757 509 Q753 505 748 505 Z" fill="#c8c8c8" stroke="none"/>
  <path d="M692.8 531.5 L743.3 551.4 L730.7 576.6 L682.2 555.4 L683 552 Z" fill="#1e1e1e"/>
  <path d="M684 550 Q685 540 692 533" stroke="#e0e0e0" stroke-width="2" fill="none"/>
  <path d="M748 586 L806 560 L809.2 639.1 L753.7 667 L748 663 Z" fill="#d2cfc7"/>
  <circle cx="756.2" cy="651.8" r="2.6" fill="#f4f4f4" stroke="#333"/>
  <ellipse cx="781.5" cy="612" rx="15" ry="17" fill="#e0ded8" stroke="#444" stroke-width=".8"/>
  <ellipse cx="784" cy="613" rx="12.5" ry="15" fill="#1a1a1a" stroke="none"/>
</g>

<!-- ============ idler block ============ -->
<g id="idler" stroke="#03031a" stroke-width="1.1" stroke-linejoin="round">
  <!-- main silhouette -->
  <path d="M752.2 559 L761.9 542 L772.7 531.2 L789.6 520.9 L877.6 477.5 L883.4 479 L908 467.4 L954.3 481.8 Q966 488 964.8 499 L964.8 530.7 Q955 544 938.4 546.7 L938.4 623.6 L926.8 628 L926.8 662 Q915 673 900 672.5 Q885 672 877.6 668 L863.3 661.6 L842 651.7 L808 638.4 L803 625 L787.7 604.6 L770 598 L752 586 L748 575 Z" fill="url(#armfront)"/>
  <!-- arm top face -->
  <path d="M772.7 531.2 L789.6 520.9 L877.6 477.5 L883.4 479 L908 467.4 L954.3 481.8 Q966 488 964.8 499 Q958 508 940 512 L926.4 513.4 Q920 524 901 526.5 Q885 526.5 877.4 523.9 L863.4 517.2 L806.5 544.4 Z" fill="#292d9c"/>
  <!-- arm rounded end -->
  <path d="M748 575 L752.2 559 L761.9 542 L772.7 531.2 L806.5 544.4 Q796 556 793 572 L790 590 Q788 600 787.7 604.6 L770 598 L752 586 Z" fill="#242897"/>
  <path d="M762 541 L800 556 M753 557 L794 572 M749 573 L790 589" fill="none" stroke-width="1"/>
  <ellipse cx="801" cy="530.6" rx="11" ry="5.3" fill="#2a30b0"/>
  <path d="M799 534 L804 527" stroke="#6a70d0" stroke-width=".8"/>
  <!-- ledge front face -->
  <path d="M926.4 513.4 Q948 511 964.8 499 L964.8 530.7 Q955 544 938.4 546.7 L926.8 546.7 Z" fill="#1f2290"/>
  <path d="M926.8 546.7 H938.4 V623.6 L926.8 628 Z" fill="#13166a"/>
  <!-- vertical side face -->
  <path d="M863.4 517.2 L877.4 523.9 V668 L863.3 661.6 Z" fill="#171a76"/>
  <!-- cylinder -->
  <path d="M877.4 523.9 Q885 526.5 901 526.5 Q920 524 926.4 513.4 V662 Q915 673 900 672.5 Q885 672 877.4 668 Z" fill="url(#cyl)"/>
  <ellipse cx="897.2" cy="513.1" rx="22.8" ry="10.75" fill="#16196e"/>
  <path d="M876 515 A21 9 0 0 1 918 514" fill="none" stroke-width=".9"/>
  <ellipse cx="929.4" cy="496" rx="19.8" ry="9.3" fill="#16196e"/>
  <path d="M911 498 A18 7.5 0 0 1 947 497" fill="none" stroke-width=".9"/>
  <ellipse cx="902.5" cy="497.1" rx="5.3" ry="2.7" fill="#1c1f82"/>
  <ellipse cx="956.6" cy="487.9" rx="5.3" ry="3" fill="#1c1f82"/>
  <!-- holes on front face -->
  <ellipse cx="853" cy="561" rx="5" ry="7.5" fill="#15186c"/>
  <ellipse cx="852" cy="637.8" rx="5" ry="7.5" fill="#15186c"/>
  <path d="M842 630 Q840 645 842 651.7" fill="none"/>
</g>
<!-- hex recess with pulley -->
<defs><linearGradient id="hexg" x1="0" y1="0" x2="1" y2="1"><stop offset="0" stop-color="#0a0c30"/><stop offset="1" stop-color="#1a1e80"/></linearGradient></defs>
<path d="M817.7 578 L837 569 L854 596 L842 630 L807 630 L803 600 Z" fill="url(#hexg)" stroke="#03031a" stroke-width="1.1"/>
<path d="M837 569 L854 596 L848 598 L834 573 Z" fill="#1e2288" stroke="#03031a" stroke-width=".8"/>
<g stroke="#1a1a1a" stroke-width="1">
  <path d="M790 584 L812 592 L812 628 L792 622 Z" fill="#2a2a2a" stroke="none"/>
  <path d="M792 590 h16 M791 597 h18 M791 604 h18 M791 611 h18 M792 618 h16" stroke="#8a877f" stroke-width="1.3"/>
  <path d="M812 592 Q806 614 815 634 L826 634 L826 593 Z" fill="#a8a59c"/>
  <ellipse cx="826" cy="614" rx="14" ry="21" fill="#d6d3ca"/>
  <ellipse cx="834.6" cy="616" rx="5" ry="7" fill="#bcb9b0"/>
  <ellipse cx="836" cy="616" rx="3" ry="4.5" fill="#d0cdc4" stroke="#555" stroke-width=".6"/>
  <path d="M815 628 L836 622" stroke="#444" stroke-width="1"/>
</g>
<path d="M806.5 544.4 Q796 556 793 572 Q784 580 786 595 Q790 606 800 604 Q808 600 808 588 L812 575 Z" fill="#242896" stroke="#03031a" stroke-width="1.1"/>
<ellipse cx="796" cy="589" rx="5.5" ry="9" fill="#15186c" stroke="#03031a" stroke-width="1"/>

<!-- ============ view cube ============ -->
<g id="viewcube">
  <path d="M1501.5 182 L1526.6 171.6 L1571.3 182 L1539.2 195.7 Z" fill="#ffffff" fill-opacity="0.42" stroke="#9a9ab0" stroke-width=".6"/>
  <path d="M1501.5 182 L1539.2 195.7 L1538 242.6 L1505 224.3 Z" fill="#ffffff" fill-opacity="0.32" stroke="#9a9ab0" stroke-width=".6"/>
  <path d="M1539.2 195.7 L1571.3 182 L1571.3 219.7 L1538 242.6 Z" fill="#ffffff" fill-opacity="0.36" stroke="#9a9ab0" stroke-width=".6"/>
  <text x="1509" y="208" font-family="Liberation Sans" font-size="9" fill="#7a7a8a" fill-opacity="0.8" transform="rotate(30 1509 208)">LEFT</text>
  <text x="1543" y="222" font-family="Liberation Sans" font-size="9" fill="#7a7a8a" fill-opacity="0.8" transform="rotate(-30 1543 222)">FRONT</text>
  <path d="M1539 242.6 V190" stroke="#4040e0" stroke-width="1.2"/>
  <path d="M1539 242.6 L1571.5 221.7" stroke="#b02040" stroke-width="1.3"/>
  <path d="M1539 242.6 L1500 222.9" stroke="#30a040" stroke-width="1.3"/>
  <path d="M1535.5 177 H1542.5 L1535.5 186.5 H1542.5" fill="none" stroke="#4a4ae8" stroke-width="1.1"/>
  <path d="M1573 213 L1580 223 M1580 213 L1573 223" stroke="#c03050" stroke-width="1.1"/>
  <path d="M1492.5 214.5 L1496 219.5 L1499.5 214.5 M1496 219.5 V224.5" fill="none" stroke="#60d060" stroke-width="1.1"/>
</g>
</g>
</svg>


<!-- bottom nav bar -->
<div class="a" style="left:682px;top:818px;width:237px;height:11px;background:#f2f2f2"></div>
<svg style="left:682px;top:818px" width="237" height="11">
  <g fill="none" stroke="#444" stroke-width="1">
    <path d="M11 12 V5.5 M8 8 L11 4.5 L14 8"/>
    <path d="M4 11.5 H18"/>
  </g>
  <rect x="24" y="9.5" width="5.5" height="1.5" fill="#222"/>
  <path d="M36.5 12 V7 L39 5 L50 5 L51.5 7 V12" fill="none" stroke="#555" stroke-width="1"/>
  <path d="M40 6.5 L44 4.5 L48 6 L50 4" fill="none" stroke="#555" stroke-width="1"/>
  <path d="M66 12 V7.5 Q66 5.5 67.5 6 V10 M68.5 10 V6 Q69 4.5 70.5 5.5 V10 M71.5 10 V5.5 Q72.5 4.5 73.5 5.5 V10 M74.5 10 V7 Q76 6.5 76.5 8 L78 11" fill="none" stroke="#555" stroke-width=".9"/>
  <circle cx="95" cy="12.5" r="6.5" fill="#dfe8e8" stroke="#555" stroke-width="1"/>
  <path d="M103 5.5 h4 M105 3.5 v4 M103 9.5 h4" stroke="#333" stroke-width="1"/>
  <circle cx="122" cy="13" r="8" fill="#dfe8e8" stroke="#555" stroke-width="1"/>
  <path d="M114 5 h2 M128 5 h2 M130 6 v2 M130 10 v2" stroke="#555" stroke-width="1"/>
  <rect x="135" y="9.5" width="5.5" height="1.5" fill="#222"/>
  <rect x="147.5" y="4.5" width="15" height="9" fill="#93b4dc" stroke="#555" stroke-width="1.4"/>
  <rect x="166" y="9.5" width="5.5" height="1.5" fill="#222"/>
  <path d="M178.5 4.5 H193.5 V12 H178.5 Z M178.5 8 H193.5 M182.5 4.5 V12 M186 4.5 V12 M189.5 4.5 V12" fill="none" stroke="#666" stroke-width="1"/>
  <rect x="196" y="9.5" width="5.5" height="1.5" fill="#222"/>
  <rect x="209" y="4.5" width="14.5" height="9" fill="#7fa3d4" stroke="#3a5a9a" stroke-width="1"/>
  <path d="M216.2 4.5 V13" stroke="#f2f2f2" stroke-width="1.2"/>
  <rect x="211" y="7" width="3.5" height="2.5" fill="#b8cdea"/>
  <rect x="218.5" y="7" width="3.5" height="2.5" fill="#b8cdea"/>
  <rect x="227.5" y="9.5" width="5.5" height="1.5" fill="#222"/>
</svg>
</body></html>
